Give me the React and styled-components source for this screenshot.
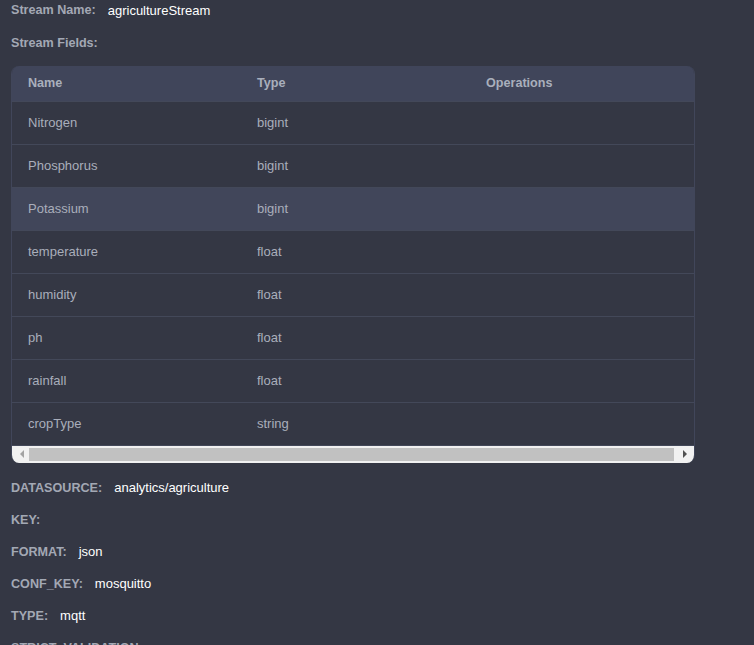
import React from "react";
import styled, { createGlobalStyle } from "styled-components";

const GlobalStyle = createGlobalStyle`
  html, body {
    margin: 0;
    padding: 0;
    background: #343744;
    font-family: "Liberation Sans", Arial, sans-serif;
    overflow: hidden;
  }
`;

const Page = styled.div`
  padding: 0 11px;
  width: 684px;
`;

const InfoRow = styled.div`
  display: flex;
  align-items: center;
  height: 20px;
  font-size: 13px;
  margin-top: ${(p) => p.$top ?? 12}px;
`;

const Label = styled.span`
  color: #a3a8b4;
  font-weight: bold;
  font-size: 12.6px;
  margin-right: 12px;
`;

const Value = styled.span`
  color: #ffffff;
`;

const TableWrap = styled.div`
  margin-top: 13px;
  border: 1px solid #41465a;
  border-top: none;
  border-bottom: none;
  border-radius: 8px;
  overflow: hidden;
  background: #343744;
`;

const Table = styled.table`
  border-collapse: collapse;
  width: 687px;
  table-layout: fixed;
  font-size: 13px;
`;

const HeadCell = styled.th`
  background: #40455a;
  color: #a9afbc;
  font-weight: bold;
  font-size: 12.6px;
  text-align: left;
  height: 35px;
  padding: 0 16px;
  width: 229px;
  box-sizing: border-box;
`;

const Row = styled.tr`
  background: ${(p) => (p.$active ? "#41465a" : "#343744")};
  border-top: 1px solid #434859;
  &:last-child {
    border-bottom: 1px solid #434859;
  }
`;

const Cell = styled.td`
  color: #a9aebb;
  height: 42px;
  padding: 0 16px;
`;

const ScrollBar = styled.div`
  display: flex;
  align-items: center;
  height: 17px;
  background: #f1f1f1;
  padding: 0 2px;
`;

const Arrow = styled.div`
  width: 15px;
  display: flex;
  justify-content: center;
  &::before {
    content: "";
    border-top: 4px solid transparent;
    border-bottom: 4px solid transparent;
    ${(p) =>
      p.$dir === "left"
        ? "border-right: 4px solid #a3a3a3;"
        : "border-left: 4px solid #505050;"}
  }
`;

const Thumb = styled.div`
  flex: 1;
  height: 13px;
  background: #c1c1c1;
  margin-right: 3px;
`;

const fields = [
  ["Nitrogen", "bigint"],
  ["Phosphorus", "bigint"],
  ["Potassium", "bigint"],
  ["temperature", "float"],
  ["humidity", "float"],
  ["ph", "float"],
  ["rainfall", "float"],
  ["cropType", "string"],
];

const options = [
  ["DATASOURCE:", "analytics/agriculture"],
  ["KEY:", ""],
  ["FORMAT:", "json"],
  ["CONF_KEY:", "mosquitto"],
  ["TYPE:", "mqtt"],
  ["STRICT_VALIDATION:", ""],
];

export default function App() {
  return (
    <>
      <GlobalStyle />
      <Page>
        <InfoRow $top={0}>
          <Label>Stream Name:</Label>
          <Value>agricultureStream</Value>
        </InfoRow>
        <InfoRow $top={13}>
          <Label>Stream Fields:</Label>
        </InfoRow>
        <TableWrap>
          <Table>
            <thead>
              <tr>
                <HeadCell>Name</HeadCell>
                <HeadCell>Type</HeadCell>
                <HeadCell>Operations</HeadCell>
              </tr>
            </thead>
            <tbody>
              {fields.map(([name, type]) => (
                <Row key={name} $active={name === "Potassium"}>
                  <Cell>{name}</Cell>
                  <Cell>{type}</Cell>
                  <Cell />
                </Row>
              ))}
            </tbody>
          </Table>
          <ScrollBar>
            <Arrow $dir="left" />
            <Thumb />
            <Arrow $dir="right" />
          </ScrollBar>
        </TableWrap>
        {options.map(([k, v], i) => (
          <InfoRow key={k} $top={i === 0 ? 15 : 12}>
            <Label>{k}</Label>
            {v && <Value>{v}</Value>}
          </InfoRow>
        ))}
      </Page>
    </>
  );
}
